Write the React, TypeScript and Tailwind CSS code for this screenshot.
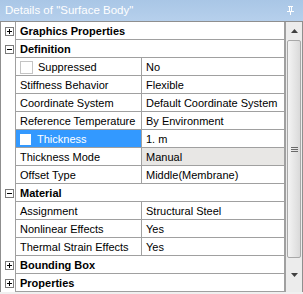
import React from 'react'

type Row =
  | { kind: 'section'; label: string; open: boolean }
  | { kind: 'prop'; label: string; value: string; check?: boolean; selected?: boolean; grayValue?: boolean }

const rows: Row[] = [
  { kind: 'section', label: 'Graphics Properties', open: false },
  { kind: 'section', label: 'Definition', open: true },
  { kind: 'prop', label: 'Suppressed', value: 'No', check: true },
  { kind: 'prop', label: 'Stiffness Behavior', value: 'Flexible' },
  { kind: 'prop', label: 'Coordinate System', value: 'Default Coordinate System' },
  { kind: 'prop', label: 'Reference Temperature', value: 'By Environment' },
  { kind: 'prop', label: 'Thickness', value: '1. m', check: true, selected: true },
  { kind: 'prop', label: 'Thickness Mode', value: 'Manual', grayValue: true },
  { kind: 'prop', label: 'Offset Type', value: 'Middle(Membrane)' },
  { kind: 'section', label: 'Material', open: true },
  { kind: 'prop', label: 'Assignment', value: 'Structural Steel' },
  { kind: 'prop', label: 'Nonlinear Effects', value: 'Yes' },
  { kind: 'prop', label: 'Thermal Strain Effects', value: 'Yes' },
  { kind: 'section', label: 'Bounding Box', open: false },
  { kind: 'section', label: 'Properties', open: false },
]

function Expander({ open }: { open: boolean }) {
  return (
    <div className="relative w-[9px] h-[9px] border border-[#7a7a7a] bg-white">
      <div className="absolute left-[1px] top-[3px] w-[5px] h-px bg-black" />
      {!open && <div className="absolute left-[3px] top-[1px] w-px h-[5px] bg-black" />}
    </div>
  )
}

function GridRow({ row }: { row: Row }) {
  if (row.kind === 'section') {
    return (
      <div className="flex h-[18px]">
        <div className="w-[15px] shrink-0 flex items-center justify-center pl-[2px] border-r border-[#a0a0a0]">
          <Expander open={row.open} />
        </div>
        <div className="flex-1 flex items-center pl-[4px] pt-px font-bold border-b border-[#a0a0a0] text-black">
          {row.label}
        </div>
      </div>
    )
  }
  return (
    <div className="flex h-[18px]">
      <div className="w-[15px] shrink-0 border-r border-[#a0a0a0]" />
      <div
        className={
          row.selected
            ? 'w-[126px] shrink-0 flex items-center pl-[3px] pt-px border-b border-r border-[#a0a0a0] bg-[#3399ff] text-white'
            : 'w-[126px] shrink-0 flex items-center pl-[4px] pt-px border-b border-r border-[#a0a0a0] text-black'
        }
      >
        {row.check && (
          <div
            className={
              row.selected
                ? 'w-[13px] h-[13px] mr-[5px] bg-white border border-[#3399ff]'
                : 'w-[13px] h-[13px] mr-[5px] bg-white border border-[#c4c4c4]'
            }
          />
        )}
        {row.label}
      </div>
      <div
        className={
          row.grayValue
            ? 'flex-1 flex items-center pl-[4px] pt-px border-b border-[#a0a0a0] bg-[#e8e7e5] text-black whitespace-nowrap overflow-hidden'
            : 'flex-1 flex items-center pl-[4px] pt-px border-b border-[#a0a0a0] text-black whitespace-nowrap overflow-hidden'
        }
      >
        {row.value}
      </div>
    </div>
  )
}

function Scrollbar() {
  return (
    <div className="w-[17px] shrink-0 flex flex-col bg-[#ececec] border-l border-[#a0a0a0]">
      <div className="h-[18px] flex items-center justify-center">
        <svg width="7" height="4" viewBox="0 0 7 4">
          <path d="M3.5 0 L7 4 L0 4 Z" fill="#404040" />
        </svg>
      </div>
      <div className="mx-[1px] h-[218px] rounded-[2px] border border-[#a8a8a8] bg-gradient-to-r from-[#f4f4f4] to-[#dadada] flex items-center justify-center">
        <div className="flex flex-col gap-[1px]">
          <div className="w-[7px] h-px bg-[#6a6a6a]" />
          <div className="w-[7px] h-px bg-[#6a6a6a]" />
          <div className="w-[7px] h-px bg-[#6a6a6a]" />
        </div>
      </div>
      <div className="flex-1 flex items-center justify-center">
        <svg width="7" height="4" viewBox="0 0 7 4">
          <path d="M0 0 L7 0 L3.5 4 Z" fill="#404040" />
        </svg>
      </div>
    </div>
  )
}

export default function App() {
  return (
    <div className="w-[303px] h-[294px] bg-[#f0f0f0] overflow-hidden text-[11px]" style={{ fontFamily: '"Liberation Sans", Arial, sans-serif' }}>
      {/* Title bar */}
      <div className="h-[21px] flex items-center justify-between pl-[5px] pr-[9px] bg-gradient-to-b from-[#a9c6e6] to-[#b6d0ec]">
        <span className="text-white text-[11.5px]">Details of "Surface Body"</span>
        <svg width="7" height="9" viewBox="0 0 7 9">
          <path d="M1 0 H6 V1 H5 V5 H7 V6 H4 V9 H3 V6 H0 V5 H2 V1 H1 Z M3 1 V5 H4 V1 Z" fill="#ffffff" />
        </svg>
      </div>
      {/* Grid + scrollbar */}
      <div className="flex h-[271px] border-t border-l border-r border-[#8f8f8f] bg-white">
        <div className="flex-1 flex flex-col border-r border-[#a0a0a0]">
          {rows.map((row) => (
            <GridRow key={row.label} row={row} />
          ))}
        </div>
        <Scrollbar />
      </div>
      <div className="h-[2px] bg-[#f0f0f0]" />
    </div>
  )
}
